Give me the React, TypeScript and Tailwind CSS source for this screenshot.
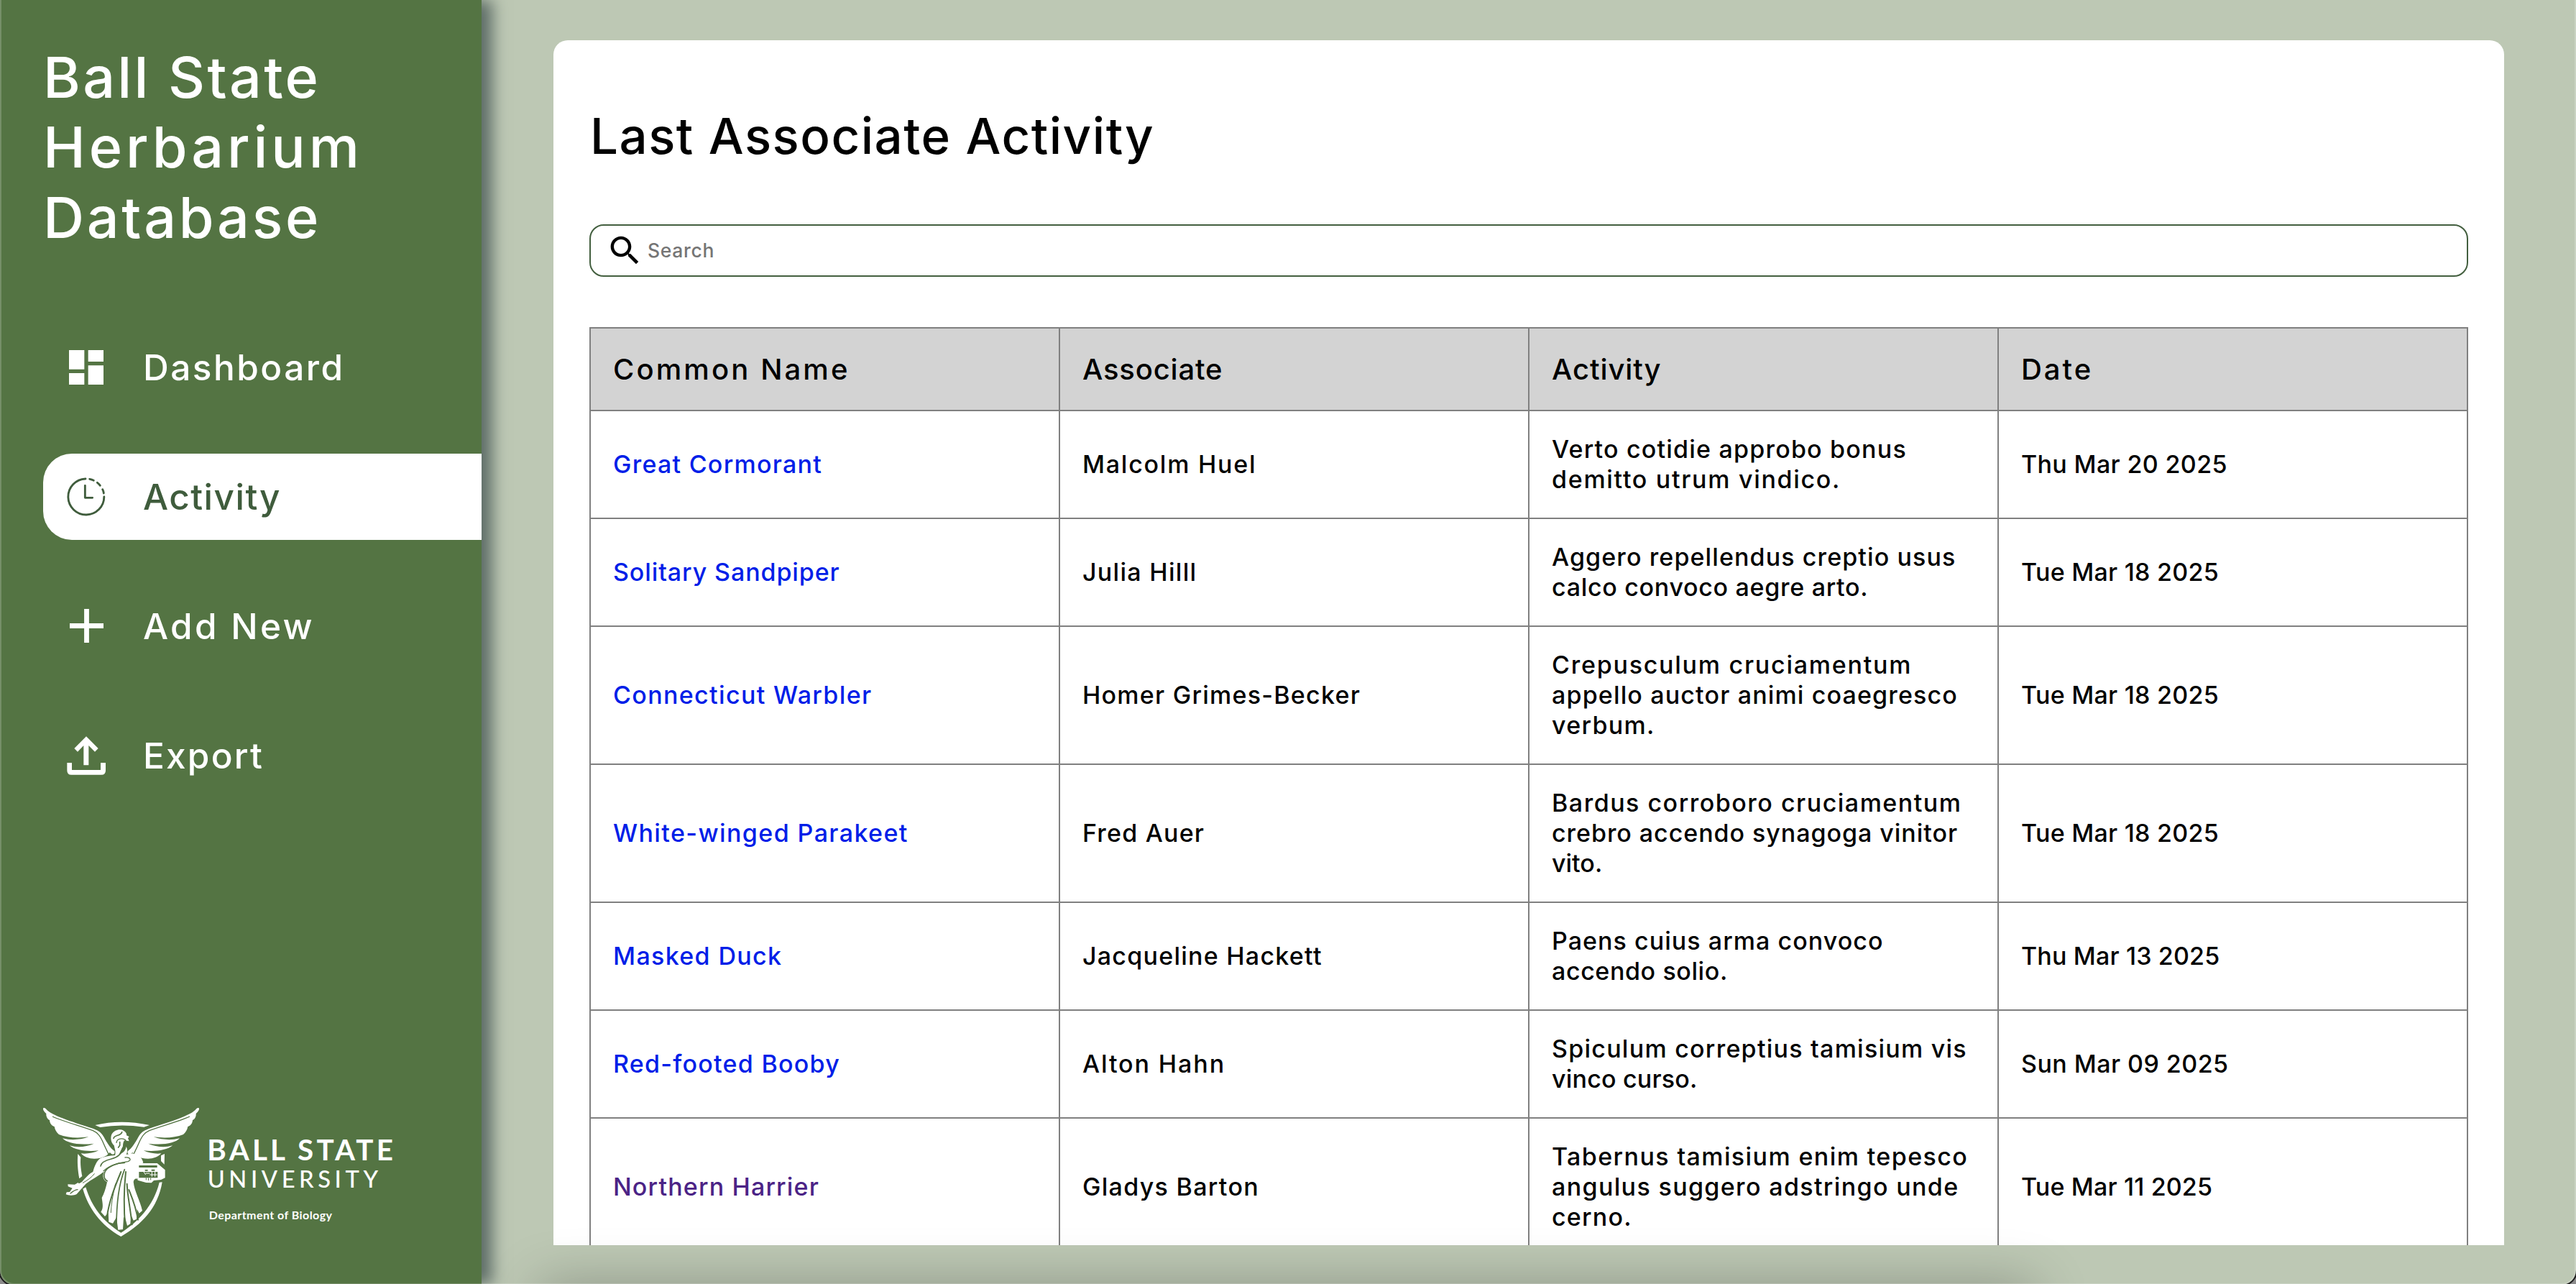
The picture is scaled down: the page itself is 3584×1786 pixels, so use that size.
import React from 'react';

type Line = [text: string, tracking: string];

interface ActivityRow {
  name: Line;
  visited?: boolean;
  associate: Line;
  activity: Line[];
  date: Line;
}

const rows: ActivityRow[] = [
  {
    name: ['Great Cormorant', 'tracking-[1.25px]'],
    associate: ['Malcolm Huel', 'tracking-[1.75px]'],
    activity: [
      ['Verto cotidie approbo bonus', 'tracking-[1.2px]'],
      ['demitto utrum vindico.', 'tracking-[1.7px]'],
    ],
    date: ['Thu Mar 20 2025', 'tracking-[0.35px]'],
  },
  {
    name: ['Solitary Sandpiper', 'tracking-[0.9px]'],
    associate: ['Julia Hilll', 'tracking-[1.3px]'],
    activity: [
      ['Aggero repellendus creptio usus', 'tracking-[1.1px]'],
      ['calco convoco aegre arto.', 'tracking-[0.7px]'],
    ],
    date: ['Tue Mar 18 2025', 'tracking-[0.25px]'],
  },
  {
    name: ['Connecticut Warbler', 'tracking-[1.35px]'],
    associate: ['Homer Grimes-Becker', 'tracking-[1.25px]'],
    activity: [
      ['Crepusculum cruciamentum', 'tracking-[1.75px]'],
      ['appello auctor animi coaegresco', 'tracking-[1.15px]'],
      ['verbum.', 'tracking-[1.3px]'],
    ],
    date: ['Tue Mar 18 2025', 'tracking-[0.25px]'],
  },
  {
    name: ['White-winged Parakeet', 'tracking-[1.4px]'],
    associate: ['Fred Auer', 'tracking-[1.2px]'],
    activity: [
      ['Bardus corroboro cruciamentum', 'tracking-[1.5px]'],
      ['crebro accendo synagoga vinitor', 'tracking-[0.95px]'],
      ['vito.', 'tracking-[0px]'],
    ],
    date: ['Tue Mar 18 2025', 'tracking-[0.25px]'],
  },
  {
    name: ['Masked Duck', 'tracking-[1.35px]'],
    associate: ['Jacqueline Hackett', 'tracking-[1.25px]'],
    activity: [
      ['Paens cuius arma convoco', 'tracking-[1.05px]'],
      ['accendo solio.', 'tracking-[0.6px]'],
    ],
    date: ['Thu Mar 13 2025', 'tracking-[0.15px]'],
  },
  {
    name: ['Red-footed Booby', 'tracking-[1.25px]'],
    associate: ['Alton Hahn', 'tracking-[1.9px]'],
    activity: [
      ['Spiculum correptius tamisium vis', 'tracking-[1.25px]'],
      ['vinco curso.', 'tracking-[0.2px]'],
    ],
    date: ['Sun Mar 09 2025', 'tracking-[0.45px]'],
  },
  {
    name: ['Northern Harrier', 'tracking-[1.15px]'],
    visited: true,
    associate: ['Gladys Barton', 'tracking-[1.3px]'],
    activity: [
      ['Tabernus tamisium enim tepesco', 'tracking-[1.4px]'],
      ['angulus suggero adstringo unde', 'tracking-[1.35px]'],
      ['cerno.', 'tracking-[1.2px]'],
    ],
    date: ['Tue Mar 11 2025', 'tracking-[0.15px]'],
  },
];

const headers: Line[] = [
  ['Common Name', 'tracking-[3.1px]'],
  ['Associate', 'tracking-[0.8px]'],
  ['Activity', 'tracking-[0.9px]'],
  ['Date', 'tracking-[3px]'],
];

function DashboardIcon() {
  return (
    <svg className="size-16" viewBox="0 0 24 24" fill="currentColor">
      <path d="M3 13h8V3H3v10zm0 8h8v-6H3v6zm10 0h8V11h-8v10zm0-18v6h8V3h-8z" />
    </svg>
  );
}

function ActivityIcon() {
  return (
    <svg className="size-[72px]" viewBox="0 0 216 216" fill="none" stroke="currentColor" strokeWidth="8.5" strokeLinecap="round" strokeLinejoin="round">
      <path d="M182.500 108A75 75 0 1 1 105 33" />
      <path d="M122 34Q131 35.500 139 39.500M154 49Q161 54 166 61M176 77Q180 85 181 93" />
      <path d="M103 61V112H134" />
    </svg>
  );
}

function PlusIcon() {
  return (
    <svg className="size-[47px]" viewBox="0 0 47 47" fill="none" stroke="currentColor" strokeWidth="6.8">
      <path d="M23.500 0V47M0 23.500H47" />
    </svg>
  );
}

function ExportIcon() {
  return (
    <svg className="size-[72px]" viewBox="0 0 216 216" fill="currentColor">
      <path d="M108 28L158 78L144 92L118 66V148H97V66L72 92L58 78Z" />
      <path d="M28 138H48V168H168V138H189V170Q189 188 171 188H46Q28 188 28 170Z" />
    </svg>
  );
}

function SearchIcon() {
  return (
    <svg className="size-[53px]" viewBox="0 0 24 24" fill="currentColor">
      <path d="M15.500 14h-.79l-.28-.27C15.410 12.590 16 11.110 16 9.500 16 5.910 13.090 3 9.500 3S3 5.910 3 9.500 5.910 16 9.500 16c1.610 0 3.090-.59 4.230-1.570l.27.28v.79l5 4.990L20.490 19l-4.990-5zm-6 0C7.010 14 5 11.990 5 9.500S7.010 5 9.500 5 14 7.010 14 9.500 11.990 14 9.500 14z" />
    </svg>
  );
}

function Wing() {
  return (
    <>
      <path
        fill="#fff"
        d="M60 37C60 31 68 32 74 40C95 64 170 88 270 120C294 129 304 138 313 154C327 180 341 202 358 214C360 222 357 230 346 226L338 219L326 231C285 254 240 248 218 223C240 226 268 222 292 211C250 217 195 211 170 190C205 200 240 196 272 182C210 190 158 180 141 160C175 169 215 167 250 154C205 160 160 158 126 144C116 135 110 126 107 111C96 108 88 98 87 84C77 80 72 68 73 57C65 50 60 44 60 37Z"
      />
      <path
        fill="none"
        stroke="#547443"
        strokeWidth="4"
        d="M99 69C150 92 230 112 268 128C290 138 298 152 306 168Q320 200 334 228"
      />
    </>
  );
}

function Logo() {
  return (
    <svg className="h-[200px] w-[520px]" viewBox="0 0 1560 600">
      <g fill="#fff">
        <path d="M277 105Q385 79 504 105L481 113Q385 99 298 114Z" />
        <path d="M205 225L217 239C214 268 219 295 223 318L211 328C204 290 202 260 205 225Z" />
        <path d="M552 232L567 225L566 269L552 255Z" />
        <path d="M226 371L238 364C262 445 310 508 385 554C455 510 522 440 545 344L557 343C540 450 470 522 385 570C300 522 248 450 226 371Z" />
      </g>
      <Wing />
      <g transform="translate(771 0) scale(-1 1)">
        <Wing />
      </g>
      <g fill="#fff">
        <path d="M356 190C344 180 339 158 347 142C357 126 380 119 396 128C406 133 410 142 408 148L419 153L414 160L419 172L409 170C398 164 394 175 393 192C389 207 380 214 376 234L360 232C365 216 358 202 356 190Z" />
        <path d="M300 243C320 234 345 232 372 230C394 222 404 212 407 194C413 206 412 217 407 228L432 223C456 228 474 240 478 262L462 272L452 330C446 326 439 330 437 342C441 382 465 420 474 462L461 473L452 455L450 497L437 503L427 480L424 517L411 525L402 490L396 490L393 540L373 542L366 490L351 515L334 509L332 470L318 486L301 467C314 450 307 428 305 408C313 394 321 372 327 343C309 335 306 314 316 298C290 318 262 332 238 350L222 368L204 352L222 342C240 322 254 306 268 300C274 276 285 251 300 243Z" />
        <path d="M163 352L192 353L206 345L224 366L200 393C188 400 166 399 155 394L158 385L171 384L182 368L164 361Z" />
        <path d="M449 300L458 264H536L569 292V325L552 333L522 336L512 346L490 345L455 335Z" />
      </g>
      <g fill="none" stroke="#547443" strokeWidth="4" strokeLinecap="round">
        <path d="M354 160C358 144 384 152 389 134" strokeWidth="5" />
        <path d="M366 178C368 160 392 158 404 167" />
        <path d="M380 176V190L374 198" strokeWidth="5" />
        <path d="M392 200C388 225 372 240 345 246C320 252 302 262 300 276" strokeWidth="5" />
        <path d="M400 262C370 262 330 276 318 300C310 318 316 334 328 338" strokeWidth="5" />
        <path d="M402 240C425 238 430 252 414 257C390 262 350 264 312 296" />
        <path d="M274 308C262 324 246 334 226 346" strokeWidth="3" />
        <path d="M174 390Q190 376 204 374" />
        <path d="M400 290C380 340 366 420 366 530" strokeWidth="5" />
        <path d="M385 300C360 360 336 420 326 490" strokeWidth="6" />
        <path d="M362 350C350 400 344 440 343 470" strokeWidth="3" />
        <path d="M405 300C396 380 396 450 403 535" strokeWidth="6" />
        <path d="M410 350C412 400 424 450 431 520" strokeWidth="6" />
        <path d="M418 375C432 410 446 440 456 500" strokeWidth="6" />
      </g>
      <path fill="#547443" d="M460 273H536V282H460ZM460 300H538V325H460ZM485 291H497V296H485ZM512 290H526V296H512Z" />
      <path stroke="#fff" strokeWidth="3" fill="none" d="M488 306H505M514 300V320M527 300V320M480 300L488 312M505 312H536" />
      <path stroke="#547443" strokeWidth="3" fill="none" d="M490 325V334M500 325V336M509 325V334" />
      <g fill="#fff" fontFamily="Lato">
        <text x="745" y="252" fontSize="121" fontWeight="700" textLength="776">BALL STATE</text>
        <text x="746" y="366" fontSize="98" fontWeight="500" textLength="712">UNIVERSITY</text>
        <text x="752" y="499" fontSize="48" fontWeight="700" textLength="514">Department of Biology</text>
      </g>
    </svg>
  );
}

interface NavItemProps {
  icon: React.ReactNode;
  label: string;
  tracking: string;
  active?: boolean;
}

function NavItem({ icon, label, tracking, active }: NavItemProps) {
  return (
    <a
      className={
        active
          ? 'flex h-[120px] items-center rounded-l-[40px] bg-white text-[#3f5c3c]'
          : 'flex h-[120px] items-center text-white'
      }
    >
      <span className="flex w-[120px] shrink-0 items-center justify-center">{icon}</span>
      <span className={`pl-[19px] text-[49.500px] ${tracking}`}>{label}</span>
    </a>
  );
}

function Sidebar() {
  return (
    <aside className="relative z-10 flex w-[670px] shrink-0 flex-col bg-[#547443] pl-[60px] shadow-[15px_0_20px_#5f6e68]">
      <h1 className="mt-[59px] text-[79px] leading-[97.300px] text-white">
        <span className="block tracking-[3.3px]">Ball State</span>
        <span className="block tracking-[4.9px]">Herbarium</span>
        <span className="block tracking-[3.7px]">Database</span>
      </h1>
      <nav className="mt-[100px] flex flex-col gap-[60px]">
        <NavItem icon={<DashboardIcon />} label="Dashboard" tracking="tracking-[2.5px]" />
        <NavItem icon={<ActivityIcon />} label="Activity" tracking="tracking-[1.5px]" active />
        <NavItem icon={<PlusIcon />} label="Add New" tracking="tracking-[3.3px]" />
        <NavItem icon={<ExportIcon />} label="Export" tracking="tracking-[2.2px]" />
      </nav>
      <div className="mt-auto mb-[57px] -ml-5">
        <Logo />
      </div>
    </aside>
  );
}

const cell = 'border-2 border-[#808080] pl-[31px]';

function ActivityTable() {
  return (
    <table className="w-[2614px] table-fixed border-collapse text-left text-[34px] leading-[42px]">
      <thead>
        <tr className="h-[115px] bg-[#d3d3d3] text-[40px]">
          {headers.map(([text, tracking]) => (
            <th key={text} className={`${cell} font-medium ${tracking}`}>{text}</th>
          ))}
        </tr>
      </thead>
      <tbody>
        {rows.map((row) => (
          <tr key={row.name[0]} className={row.activity.length === 3 ? 'h-[192px]' : 'h-[150px]'}>
            <td className={`${cell} ${row.visited ? 'text-[#4b2386]' : 'text-[#001ee8]'} ${row.name[1]}`}>{row.name[0]}</td>
            <td className={`${cell} ${row.associate[1]}`}>{row.associate[0]}</td>
            <td className={cell}>
              {row.activity.map(([text, tracking]) => (
                <span key={text} className={`block whitespace-nowrap ${tracking}`}>{text}</span>
              ))}
            </td>
            <td className={`${cell} ${row.date[1]}`}>{row.date[0]}</td>
          </tr>
        ))}
      </tbody>
    </table>
  );
}

export default function App() {
  return (
    <div className="relative h-[1786px] w-[3584px] overflow-hidden bg-[#8c8c8c] font-['Inter',sans-serif] font-medium text-black">
      <div className="relative flex h-[1787px] overflow-hidden rounded-b-[20px] bg-[#bdc8b4]">
        <Sidebar />
        <main className="mt-14 ml-[100px] h-[1676px] w-[2714px] overflow-hidden rounded-t-[20px] bg-white pl-[50px]">
          <h2 className="mt-[91px] pl-px text-[69px] leading-[84px] tracking-[1.5px]">Last Associate Activity</h2>
          <div className="mt-[81px] mb-[70px] flex h-[73px] w-[2614px] items-center rounded-[20px] border-2 border-[#435f3f] pl-[21px]">
            <SearchIcon />
            <span className="pl-[5px] text-[26.500px] tracking-[0.7px] text-[#757575]">Search</span>
          </div>
          <ActivityTable />
        </main>
      </div>
      <div className="pointer-events-none absolute top-[1786px] left-[750px] z-20 h-20 w-[2080px] shadow-[0_0_75px_rgba(0,0,0,0.26)]" />
      <div className="pointer-events-none absolute -top-5 left-0 z-30 h-[1807px] w-full rounded-b-[20px] shadow-[inset_0_0_0_2px_rgba(255,255,255,0.2),0_0_0_2px_#1c1c1c]" />
    </div>
  );
}
